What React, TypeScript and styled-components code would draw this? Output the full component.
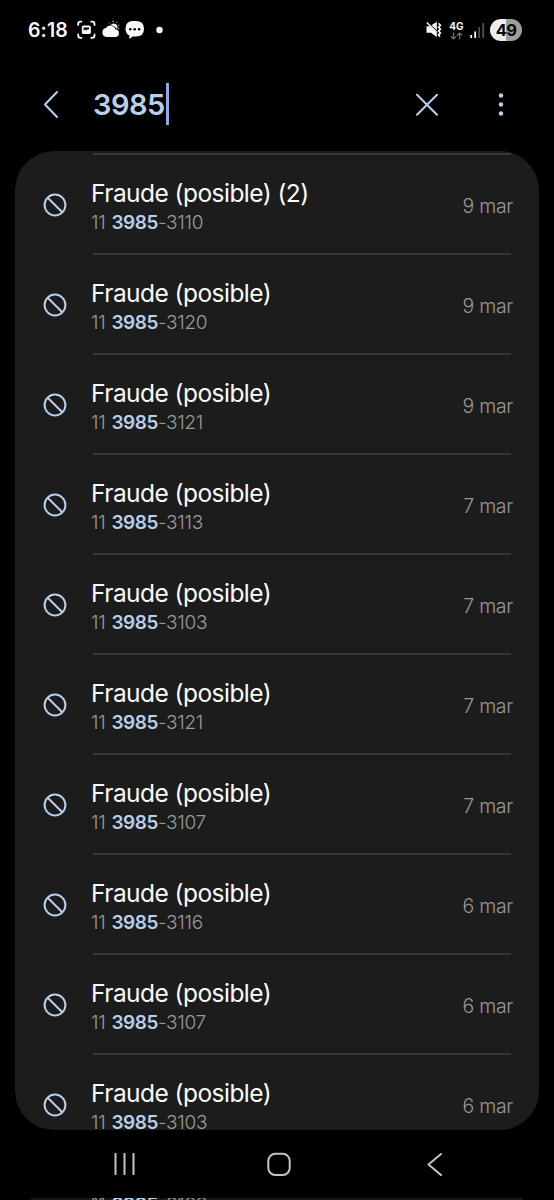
import React from "react";
import styled, { createGlobalStyle } from "styled-components";

const ACCENT = "#b9cfed";

const Global = createGlobalStyle`
  html, body { margin: 0; background: #000; }
  * { box-sizing: border-box; }
`;

const Screen = styled.main`
  width: 554px;
  height: 1200px;
  overflow: hidden;
  background: #000;
  color: #fafafa;
  font-family: Inter, "Liberation Sans", sans-serif;
  display: flex;
  flex-direction: column;
`;

const StatusBar = styled.header`
  height: 60px;
  flex: none;
  padding: 0 32px 0 28px;
  display: flex;
  align-items: center;
  justify-content: space-between;
`;

const StatusGroup = styled.div`
  display: flex;
  align-items: center;
`;

const Clock = styled.span`
  width: 49px;
  font-size: 19.5px;
  font-weight: 600;
  line-height: 24px;
  letter-spacing: 0.1px;
  white-space: nowrap;
`;

const Network = styled.div`
  width: 15px;
  margin-left: 7px;
  display: flex;
  flex-direction: column;
  align-items: center;
  font-size: 10px;
  font-weight: 700;
  line-height: 11px;
`;

const Signal = styled.svg`
  margin: 0 5px 0 6px;
`;

const Battery = styled.div`
  width: 32px;
  height: 22px;
  border-radius: 11px;
  background: linear-gradient(90deg, #ededed 0 49%, #9d9d9d 49%);
  color: #050505;
  font-size: 16.5px;
  font-weight: 700;
  line-height: 22px;
  text-align: center;
  letter-spacing: -0.8px;
`;

const SearchBar = styled.div`
  height: 91px;
  flex: none;
  padding: 0 47px 3px 42px;
  display: flex;
  align-items: center;
  color: ${ACCENT};
`;

const Query = styled.div`
  margin-left: 33px;
  flex: 1;
  display: flex;
  align-items: center;
  font-size: 29px;
  font-weight: 600;
  line-height: 42px;
  letter-spacing: -0.55px;
`;

const QueryText = styled.span`
  padding-top: 1px;
`;

const Caret = styled.span`
  width: 3px;
  height: 42px;
  margin-left: 1px;
  background: #86aee2;
`;

const MenuGap = styled.div`
  width: 56px;
`;

const Panel = styled.ul`
  height: 979px;
  flex: none;
  margin: 0 15px;
  padding: 2px 0 0;
  overflow: hidden;
  list-style: none;
  border-radius: 39px;
  background: #1c1c1c;
`;

const Row = styled.li`
  height: 100px;
  padding: 0 26px 0 28px;
  display: flex;
`;

const RowIcon = styled.div`
  width: 50px;
  padding-top: 40px;
  flex: none;
`;

const RowBody = styled.div`
  flex: 1;
  margin-right: 2px;
  border-top: 2px solid #363636;
  display: flex;
  justify-content: space-between;
`;

const Caller = styled.div`
  margin-left: -2px;
  padding-top: 22px;
`;

const Name = styled.div`
  font-size: 24.5px;
  line-height: 32px;
  letter-spacing: -0.54px;
  white-space: nowrap;
`;

const Phone = styled.div`
  color: #9a9a9a;
  font-size: 19px;
  font-weight: 300;
  line-height: 28px;
  letter-spacing: -0.3px;
  white-space: nowrap;
`;

const Match = styled.b`
  margin-left: 1px;
  color: ${ACCENT};
  font-weight: 600;
  letter-spacing: -0.45px;
`;

const CallDate = styled.time`
  margin-right: -2px;
  padding-top: 37px;
  color: #989898;
  font-size: 19.5px;
  font-weight: 300;
  line-height: 28px;
  letter-spacing: -0.3px;
  white-space: nowrap;
`;

const NavBar = styled.nav`
  height: 68px;
  flex: none;
  padding: 0 111px 0 113px;
  display: flex;
  align-items: center;
`;

const NavButton = styled.svg<{ $before?: number }>`
  flex: none;
  margin-left: ${(p) => p.$before ?? 0}px;
`;

const Underlay = styled.div`
  height: 2px;
  flex: none;
  margin: 0 31px;
  padding-left: 60px;
  overflow: hidden;
  background: #171717;
`;

const UnderlayPhone = styled(Phone)`
  margin-top: -7px;
`;

const calls = [
  ["Fraude (posible) (2)", "3110", "9 mar"],
  ["Fraude (posible)", "3120", "9 mar"],
  ["Fraude (posible)", "3121", "9 mar"],
  ["Fraude (posible)", "3113", "7 mar"],
  ["Fraude (posible)", "3103", "7 mar"],
  ["Fraude (posible)", "3121", "7 mar"],
  ["Fraude (posible)", "3107", "7 mar"],
  ["Fraude (posible)", "3116", "6 mar"],
  ["Fraude (posible)", "3107", "6 mar"],
  ["Fraude (posible)", "3103", "6 mar"],
];

const StatusIcons = () => (
  <svg width="90" height="22" viewBox="77 19 90 22" fill="#fafafa">
    <g fill="none" stroke="#fafafa" strokeWidth="1.8" strokeLinecap="round">
      <path d="M78.200 25v-1q0-2.300 2.300-2.300h1M91.200 21.700h1q2.300 0 2.300 2.300v1M94.500 34.500v1q0 2.300-2.300 2.300h-1M81.500 37.800h-1q-2.300 0-2.300-2.300v-1" />
      <rect x="82.700" y="26.500" width="7.300" height="6.700" rx="1" />
    </g>
    <path d="M83 33v-2l2-1.500 1.500 1 1.500-1.500 2 1.500V33z" />
    <path d="M106.500 37a4.500 4.500 0 0 1-.5-8.900 5.200 5.200 0 0 1 9.400 1.200 3.900 3.900 0 0 1 .4 7.700z" />
    <path d="M110.500 25.200a3.900 3.900 0 0 1 6.900 3.400l-1.200-.3c-.8-1.700-3-3.100-5.700-3.100z" />
    <path d="M109.800 23.400l-.8-.8M113.200 22v-1.200M116.400 22.700l.7-1M118.200 25.400l1-.3M118.300 28.300l1 .4" stroke="#fafafa" strokeWidth="1" />
    <path d="M133 21h3q8 0 8 7.700t-8 7.700h-3.300l-3.500 2.600.3-3.500q-4-2-4-6.800 0-7.700 7.500-7.700z" />
    <g fill="#000"><circle cx="130.300" cy="29.200" r="1.300" /><circle cx="134.700" cy="29.200" r="1.300" /><circle cx="139.100" cy="29.200" r="1.300" /></g>
    <circle cx="159.500" cy="30" r="3.200" />
  </svg>
);

const MuteIcon = () => (
  <svg width="17" height="18" viewBox="425 21 17 18" fill="#fafafa">
    <path d="M426.500 26.300h3.300l7 6.800v4l-5.800-4.400h-4.500zM431.500 25.300l5.300-3.600v8.600z" />
    <path d="M426.800 22.600L437 32.600" stroke="#fafafa" strokeWidth="1.400" />
    <path d="M438.500 23.400l1.900 1.900-1.900 1.900 1.900 2-1.900 1.900 1.900 1.900-1.900 1.900 1.500 1.700" fill="none" stroke="#fafafa" strokeWidth="1.600" />
  </svg>
);

const DataArrows = () => (
  <svg width="13" height="8" viewBox="0 0 13 8" fill="none" stroke="#747474" strokeWidth="1.200">
    <path d="M3.500.5v6.300M.8 4.300l2.700 2.700 2.700-2.700M9.500 7.500V1.200M6.800 3.700l2.700-2.700 2.700 2.700" />
  </svg>
);

const Blocked = () => (
  <svg width="24" height="24" viewBox="0 0 24 24" fill="none" stroke={ACCENT} strokeWidth="2">
    <circle cx="12" cy="12" r="10.400" />
    <path d="M4.700 4.700l14.600 14.600" />
  </svg>
);

export default function App() {
  return (
    <Screen>
      <Global />
      <StatusBar>
        <StatusGroup>
          <Clock>6:18</Clock>
          <StatusIcons />
        </StatusGroup>
        <StatusGroup>
          <MuteIcon />
          <Network>4G<DataArrows /></Network>
          <Signal width="15" height="16" viewBox="0 0 15 16">
            <path d="M1.200 16v-3M5.200 16V9.500" stroke="#fafafa" strokeWidth="1.800" />
            <path d="M9.200 16V5M13.200 16V1" stroke="#505050" strokeWidth="1.800" />
          </Signal>
          <Battery>49</Battery>
        </StatusGroup>
      </StatusBar>
      <SearchBar>
        <svg width="18" height="28" viewBox="0 0 18 28" fill="none" stroke={ACCENT} strokeWidth="2" strokeLinecap="round" strokeLinejoin="round">
          <path d="M15 2L3 14.500l12 12.500" />
        </svg>
        <Query><QueryText>3985</QueryText><Caret /></Query>
        <svg width="24" height="24" viewBox="0 0 24 24" fill="none" stroke={ACCENT} strokeWidth="2" strokeLinecap="round">
          <path d="M2 2.700l20 20M22 2.700L2 22.700" />
        </svg>
        <MenuGap />
        <svg width="12" height="24" viewBox="0 0 12 24" fill={ACCENT}>
          <circle cx="6" cy="3.500" r="2.200" /><circle cx="6" cy="12.500" r="2.200" /><circle cx="6" cy="21.500" r="2.200" />
        </svg>
      </SearchBar>
      <Panel>
        {calls.map(([name, end, date], i) => (
          <Row key={i}>
            <RowIcon><Blocked /></RowIcon>
            <RowBody>
              <Caller>
                <Name>{name}</Name>
                <Phone>11 <Match>3985</Match>-{end}</Phone>
              </Caller>
              <CallDate>{date}</CallDate>
            </RowBody>
          </Row>
        ))}
      </Panel>
      <NavBar>
        <NavButton width="22" height="22" viewBox="0 0 22 22" stroke="#c4c4c4" strokeWidth="2">
          <path d="M2.500 0v22M11.500 0v22M20.500 0v22" />
        </NavButton>
        <NavButton $before={132} width="24" height="24" viewBox="0 0 24 24" fill="none" stroke="#c4c4c4" strokeWidth="2">
          <rect x="1.300" y="1.800" width="21.400" height="21.200" rx="7" />
        </NavButton>
        <NavButton $before={136} width="16" height="24" viewBox="0 0 16 24" fill="none" stroke="#c4c4c4" strokeWidth="2" strokeLinecap="round" strokeLinejoin="round">
          <path d="M14 2L1.500 12.500 14 23" />
        </NavButton>
      </NavBar>
      <Underlay>
        <UnderlayPhone>11 <Match>3985</Match>-3103</UnderlayPhone>
      </Underlay>
    </Screen>
  );
}
